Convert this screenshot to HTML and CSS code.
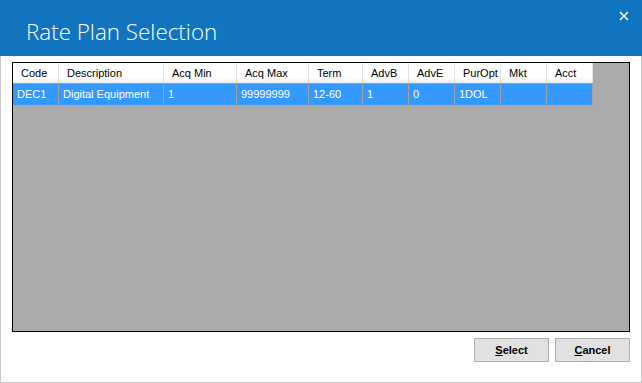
FILE: index.html
```html
<!DOCTYPE html>
<html>
<head>
<meta charset="utf-8">
<link rel="stylesheet" href="styles.css">
</head>
<body>
<div class="window">
  <div class="titlebar">
    <span class="title">Rate Plan Selection</span>
    <svg class="close" width="10" height="10" viewBox="0 0 10 10"><path d="M1 1 L9 9 M9 1 L1 9" stroke="#fff" stroke-width="1.6" fill="none"/></svg>
  </div>
  <div class="content">
    <div class="grid">
      <div class="rows">
        <div class="row head">
          <div class="cell">Code</div>
          <div class="cell">Description</div>
          <div class="cell">Acq Min</div>
          <div class="cell">Acq Max</div>
          <div class="cell">Term</div>
          <div class="cell">AdvB</div>
          <div class="cell">AdvE</div>
          <div class="cell">PurOpt</div>
          <div class="cell">Mkt</div>
          <div class="cell">Acct</div>
        </div>
        <div class="row data">
          <div class="cell">DEC1</div>
          <div class="cell">Digital Equipment</div>
          <div class="cell">1</div>
          <div class="cell">99999999</div>
          <div class="cell">12-60</div>
          <div class="cell">1</div>
          <div class="cell">0</div>
          <div class="cell">1DOL</div>
          <div class="cell"></div>
          <div class="cell"></div>
        </div>
      </div>
    </div>
    <div class="buttons">
      <button class="btn"><u>S</u>elect</button>
      <button class="btn"><u>C</u>ancel</button>
    </div>
  </div>
</div>
</body>
</html>
```
FILE: styles.css
```css
html, body {
  margin: 0;
  padding: 0;
  background: #ffffff;
}
.window {
  width: 642px;
  height: 383px;
  display: flex;
  flex-direction: column;
}
.titlebar {
  height: 56px;
  background: #1174be;
  position: relative;
  display: flex;
  align-items: flex-end;
  padding-left: 26px;
  box-sizing: border-box;
  padding-bottom: 9px;
}
.title {
  font-family: "Open Sans", "Noto Sans", sans-serif;
  font-weight: 300;
  font-size: 22.4px;
  color: #ffffff;
  line-height: 30px;
}
.close {
  position: absolute;
  left: 619px;
  top: 11px;
}
.content {
  flex: 1;
  border: 1px solid #cacaca;
  border-top: none;
  padding: 6px 11px 0 11px;
  display: flex;
  flex-direction: column;
}
.grid {
  height: 270px;
  box-sizing: border-box;
  border: 1px solid #000000;
  background: #ababab;
}
.rows {
  width: 580px;
}
.row {
  display: grid;
  grid-template-columns: 46px 105px 73px 72px 54px 46px 46px 46px 46px 46px;
  font-family: "Liberation Sans", Arial, sans-serif;
  font-size: 11px;
}
.cell {
  box-sizing: border-box;
  white-space: nowrap;
  overflow: hidden;
}
.head {
  height: 21px;
  border-bottom: 1px solid #a0a0a0;
  box-sizing: border-box;
}
.head .cell {
  background: linear-gradient(#ffffff 0%, #ffffff 70%, #eeeeee 100%);
  border-right: 1px solid #e3e3e3;
  color: #000000;
  padding-left: 8px;
  padding-top: 1px;
  line-height: 19px;
}
.data {
  height: 21px;
}
.data .cell {
  background: #3399ff;
  border-right: 1px solid #a0a0a0;
  color: #ffffff;
  padding-left: 4px;
  line-height: 21px;
}
.buttons {
  display: flex;
  justify-content: flex-end;
  gap: 6px;
  margin-top: 6px;
}
.btn {
  width: 75px;
  height: 24px;
  background: #e1e1e1;
  border: 1px solid #adadad;
  font-family: "Liberation Sans", Arial, sans-serif;
  font-weight: bold;
  font-size: 11px;
  color: #000000;
  padding: 0;
  margin: 0;
}
```
